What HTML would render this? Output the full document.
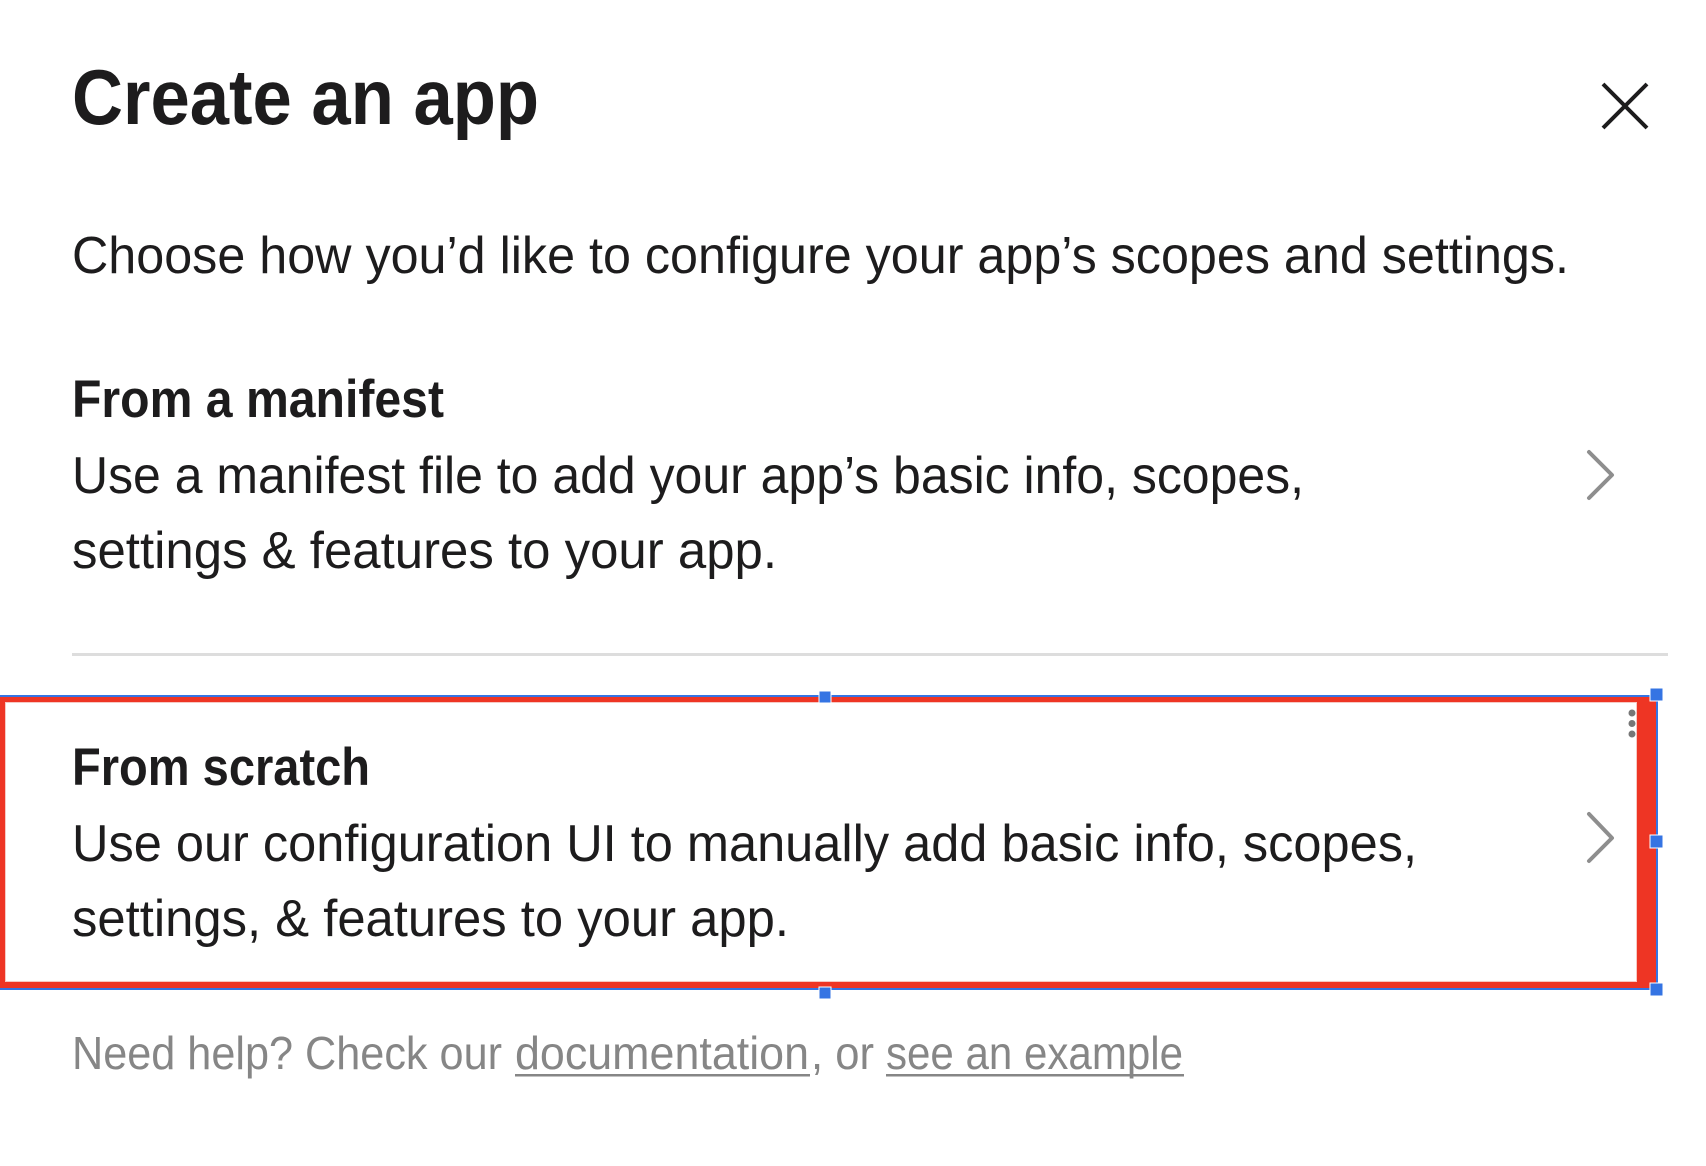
<!DOCTYPE html>
<html><head><meta charset="utf-8"><style>html,body{margin:0;padding:0;background:#fff}svg{display:block}</style></head>
<body>
<svg width="1706" height="1166" viewBox="0 0 1706 1166" xmlns="http://www.w3.org/2000/svg" font-family="Liberation Sans, sans-serif">
<rect width="1706" height="1166" fill="#fff"/>
<text x="72" y="124" font-size="78" font-weight="bold" fill="#1d1c1d" textLength="467" lengthAdjust="spacingAndGlyphs">Create an app</text>
<path d="M1612 84 L1656 128 M1656 84 L1612 128" stroke="#1d1c1d" stroke-width="4" fill="none" transform="translate(-9,0)"/>
<text x="72" y="273" font-size="52" fill="#1d1c1d" textLength="1497" lengthAdjust="spacingAndGlyphs">Choose how you’d like to configure your app’s scopes and settings.</text>
<text x="72" y="417" font-size="53" font-weight="bold" fill="#1d1c1d" textLength="372" lengthAdjust="spacingAndGlyphs">From a manifest</text>
<text x="72" y="493" font-size="52" fill="#1d1c1d" textLength="1232" lengthAdjust="spacingAndGlyphs">Use a manifest file to add your app’s basic info, scopes,</text>
<text x="72" y="568" font-size="52" fill="#1d1c1d" textLength="705" lengthAdjust="spacingAndGlyphs">settings &amp; features to your app.</text>
<path d="M1589 452 L1612 475 L1589 498" stroke="#8e8e8e" stroke-width="4" fill="none" stroke-linecap="round" stroke-linejoin="round"/>
<rect x="72" y="653" width="1596" height="3" fill="#dddddd"/>
<rect x="0" y="695" width="1658" height="295" fill="#3574e3"/>
<rect x="0" y="697" width="1656" height="291" fill="#ee3524"/>
<rect x="5" y="702" width="1632" height="280" fill="#f6c9c4"/>
<rect x="6" y="703" width="1630" height="278" fill="#fff"/>
<circle cx="1632" cy="713" r="3.5" fill="#777"/>
<circle cx="1632" cy="723.5" r="3.5" fill="#777"/>
<circle cx="1632" cy="734" r="3.5" fill="#777"/>
<g fill="#3574e3" stroke="#fff" stroke-width="1">
<rect x="1650" y="688" width="13" height="13"/>
<rect x="1650" y="835" width="13" height="13"/>
<rect x="1650" y="983" width="13" height="13"/>
<rect x="819" y="691" width="12" height="12"/>
<rect x="819" y="987" width="12" height="12"/>
</g>
<text x="72" y="785" font-size="53" font-weight="bold" fill="#1d1c1d" textLength="298" lengthAdjust="spacingAndGlyphs">From scratch</text>
<text x="72" y="861" font-size="52" fill="#1d1c1d" textLength="1345" lengthAdjust="spacingAndGlyphs">Use our configuration UI to manually add basic info, scopes,</text>
<text x="72" y="936" font-size="52" fill="#1d1c1d" textLength="717" lengthAdjust="spacingAndGlyphs">settings, &amp; features to your app.</text>
<path d="M1589 814 L1612 838 L1589 861" stroke="#8e8e8e" stroke-width="4" fill="none" stroke-linecap="round" stroke-linejoin="round"/>
<g font-size="46" fill="#868686">
<text x="72" y="1069" textLength="430" lengthAdjust="spacingAndGlyphs">Need help? Check our</text>
<text x="515" y="1069" textLength="294" lengthAdjust="spacingAndGlyphs">documentation</text>
<text x="811" y="1069" textLength="63" lengthAdjust="spacingAndGlyphs">, or</text>
<text x="886" y="1069" textLength="297" lengthAdjust="spacingAndGlyphs">see an example</text>
</g>
<rect x="515" y="1074" width="295" height="2.5" fill="#868686"/>
<rect x="886" y="1074" width="298" height="2.5" fill="#868686"/>
</svg>
</body></html>
